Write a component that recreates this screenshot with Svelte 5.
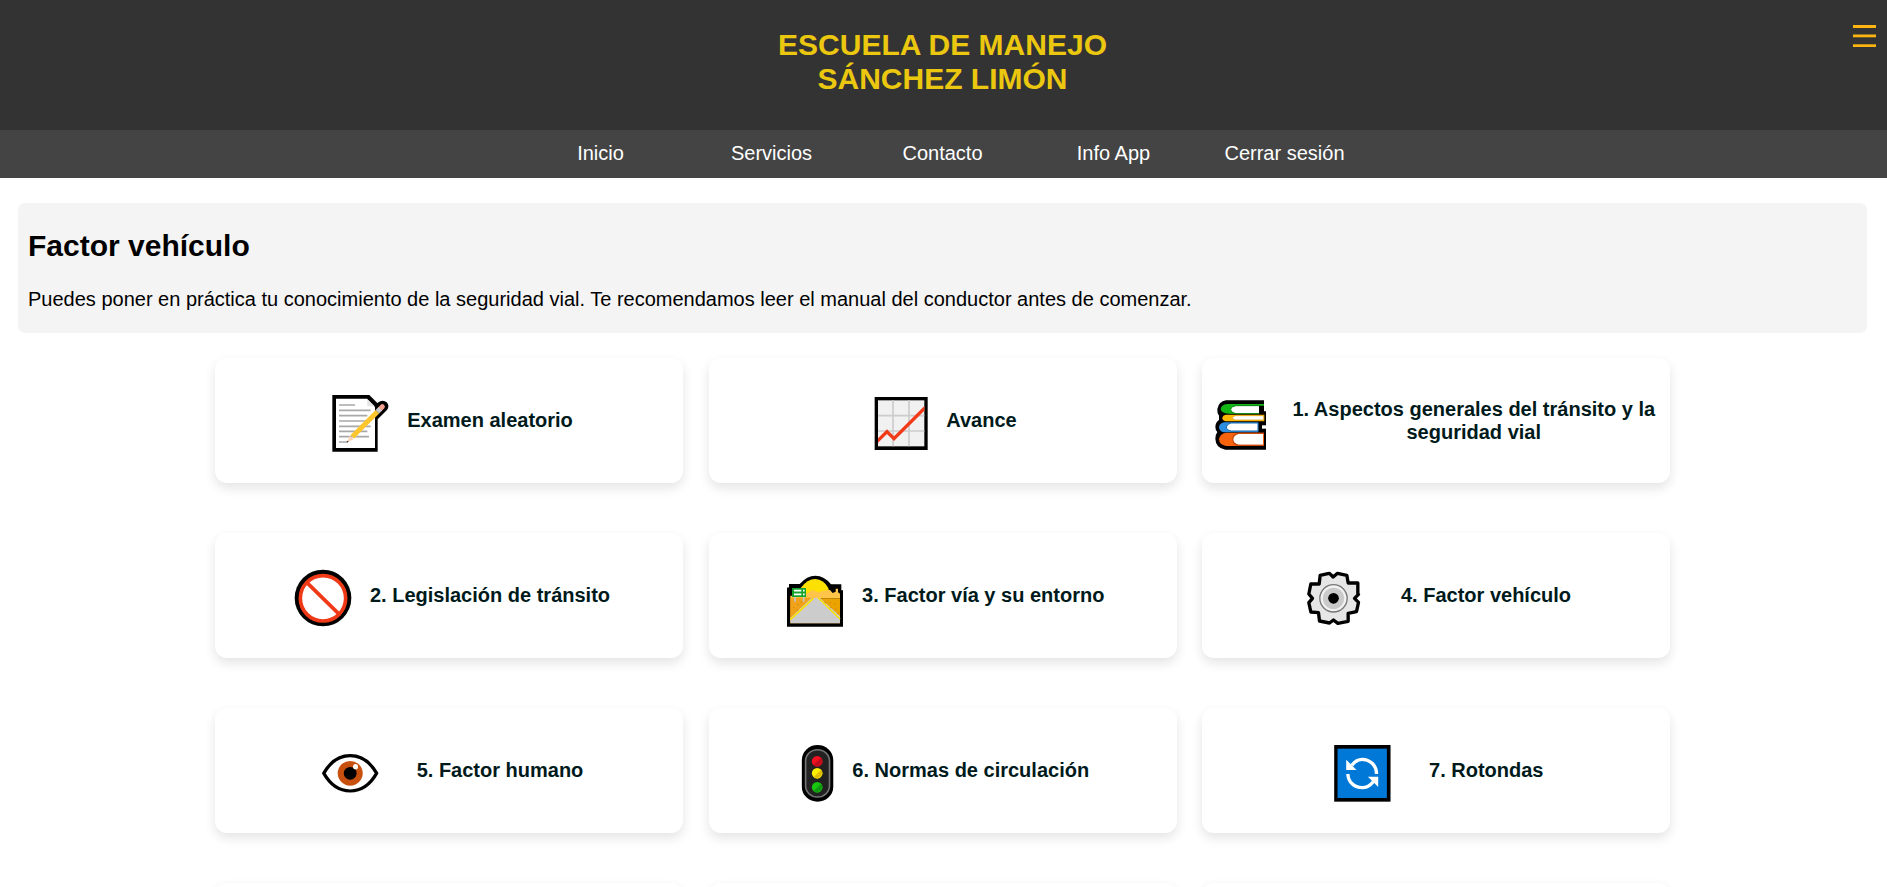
<script>
  const links = ['Inicio', 'Servicios', 'Contacto', 'Info App', 'Cerrar sesión'];
  const cards = [
    { icon: 'memo', slot: 82, text: 'Examen aleatorio' },
    { icon: 'chart', slot: 78, text: 'Avance' },
    { icon: 'books', slot: 75.5, text: '1. Aspectos generales del tránsito y la seguridad vial' },
    { icon: 'forbidden', slot: 82, text: '2. Legislación de tránsito' },
    { icon: 'road', slot: 81.5, text: '3. Factor vía y su entorno' },
    { icon: 'gear', slot: 100, text: '4. Factor vehículo' },
    { icon: 'eye', slot: 102, text: '5. Factor humano' },
    { icon: 'light', slot: 56.5, text: '6. Normas de circulación' },
    { icon: 'cycle', slot: 100.5, text: '7. Rotondas' },
    {}, {}, {}
  ];
</script>

<div class="page">
  <header>
    <h1>ESCUELA DE MANEJO<br />SÁNCHEZ LIMÓN</h1>
    <button aria-label="Menú">
      <svg width="23" height="22" viewBox="0 0 23 22" fill="#ffb511">
        <rect width="23" height="3" /><rect y="9.5" width="23" height="2.8" /><rect y="19.3" width="23" height="2.7" />
      </svg>
    </button>
  </header>

  <nav>
    {#each links as link}<a href="#top">{link}</a>{/each}
  </nav>

  <section class="intro">
    <h2>Factor vehículo</h2>
    <p>Puedes poner en práctica tu conocimiento de la seguridad vial. Te recomendamos leer el manual del conductor antes de comenzar.</p>
  </section>

  <main>
    {#each cards as card}
      <div class="card">
        {#if card.icon}
          <span class="slot" style="width: {card.slot}px">
            <svg width="70" height="64" viewBox="0 0 70 64">
              {#if card.icon === 'memo'}
                <g transform="translate(-125 -46) scale(.33333)">
                  <path d="M397 150H508L532 174Q548 162 560 172Q570 183 561 195L533 223V320H397Z" fill="#000" />
                  <path d="M408 161H501L525 186V309H408Z" fill="#fff" />
                  <path d="M502 162L524 184H502Z" fill="#e4e4e4" />
                  <path d="M417 180H465M417 196H512M417 212H502M417 228H507M417 244H512M417 259H502M417 275H507M417 291H444" stroke="#a8a8a8" stroke-width="5" />
                  <path d="M449 272L461 283L442 292Z" fill="#fbd3b4" />
                  <path d="M441 287L447 289L440 293Z" fill="#444" />
                  <path d="M457 275L532 200" stroke="#fdc62f" stroke-width="15" />
                  <path d="M541 191L547 185" stroke="#f5a18f" stroke-width="15" stroke-linecap="round" />
                  <path d="M532 200L541 191" stroke="#c9c9c9" stroke-width="15" />
                </g>
              {:else if card.icon === 'chart'}
                <g transform="translate(-168 -46) scale(.33333)">
                  <rect x="524" y="156" width="159" height="159" fill="#000" />
                  <rect x="534" y="166" width="139" height="138" fill="#f1f1f1" />
                  <path d="M579 166V304M627 166V304M534 212H673M534 258H673" stroke="#ccc" stroke-width="5" />
                  <path d="M534 280L561 253L582 274L673 183V197L582 288L561 267L534 293Z" fill="#f13a18" />
                </g>
              {:else if card.icon === 'books'}
                <g transform="translate(-22 -46) scale(.33333)">
                  <path d="M108 166H222V199H228V314H106Q77 309 76 281Q77 267 82 261Q76 256 76 245Q77 231 87 225V212Q81 205 82 192Q86 169 108 166Z" fill="#000" />
                  <path d="M112 177H222V182H207V206H117Q93 205 92 192Q94 178 112 177Z" fill="#13b713" />
                  <path d="M139 182H207V205H138Q123 203 122 193Q124 184 139 182Z" fill="#fff" />
                  <path d="M139 182H207M207 206H138Q123 203 122 193Q124 184 139 182" fill="none" stroke="#078510" stroke-width="3" />
                  <path d="M107 209H223V229H107Q96 226 97 218Q98 211 107 209Z" fill="#fdb805" />
                  <path d="M136 212H221V225H136Q127 223 127 218Q128 214 136 212Z" fill="#fff" stroke="#de9600" stroke-width="2" />
                  <path d="M102 232H205V262H101Q87 257 87 246Q88 235 102 232Z" fill="#2f8de0" />
                  <path d="M124 234H204V258H124Q110 256 109 246Q111 236 124 234Z" fill="#fff" stroke="#1167b1" stroke-width="3" />
                  <path d="M216 241H229V251H216Z" fill="#fff" />
                  <path d="M108 263H222V303H108Q88 300 87 283Q89 266 108 263Z" fill="#f7630c" />
                  <path d="M145 267H219V299H145Q128 296 127 283Q129 270 145 267Z" fill="#fff" />
                  <path d="M222 265H145Q129 269 128 283Q129 297 145 301H222" fill="none" stroke="#cc470c" stroke-width="4" />
                </g>
              {:else if card.icon === 'forbidden'}
                <g transform="translate(-8 -11) scale(.33333)">
                  <circle cx="129" cy="129" r="85" fill="#000" />
                  <circle cx="129" cy="130" r="68" fill="#fff" stroke="#f03a17" stroke-width="11" />
                  <path d="M80 82L178 178" stroke="#f03a17" stroke-width="11" />
                </g>
              {:else if card.icon === 'road'}
                <g transform="translate(-11 -11) scale(.33333)">
                  <path d="M51 215V98L57 97V87H89Q111 62 136 62Q163 62 183 88H214V106H219V215Z" fill="#000" />
                  <path d="M92 99Q112 72 136 72Q161 73 175 99L181 128H94Z" fill="#fce100" />
                  <path d="M109 128V114L120 111L126 104L145 112L157 108L174 105H180L188 114L197 110V101H204V112L210 116V130H61V122H109Z" fill="#ffc44a" />
                  <path d="M61 130H210V205H61Z" fill="#eaa300" />
                  <path d="M61 128H133L61 195Z" fill="#f0a31a" />
                  <path d="M124 129H150L210 183V205H61V189Z" fill="#ccc" />
                  <path d="M61 194L130 130M145 129L210 192" stroke="#fce100" stroke-width="5" />
                  <path d="M75 126V140M101 126V140" stroke="#c9c9c9" stroke-width="5" />
                  <rect x="66" y="99" width="42" height="27" fill="#16a52c" />
                  <path d="M72 107H94M99 107H104M72 118H94M99 118H104" stroke="#fff" stroke-width="5" />
                  <path d="M69 158h4M82 149h4M92 142h4M80 165h4M164 143h4M178 143h4M193 147h4M180 158h4M195 162h4M202 175h4" stroke="#d98a00" stroke-width="4" />
                </g>
              {:else if card.icon === 'gear'}
                <g transform="translate(-10.5 -11) scale(.33333)">
                  <path d="M89 61L112 56L117 55L128 66L141 55L169 61L173 84H202V116L204 118L192 130L204 142L198 170L173 175V199L142 205L129 195L117 204L87 198L84 173L61 171L55 143L66 130L55 117L61 87H86Z" fill="#e6e6e6" stroke="#000" stroke-width="10" stroke-linejoin="round" />
                  <circle cx="129" cy="130" r="41" fill="#f2f2f2" stroke="#777" stroke-width="4" />
                  <circle cx="129" cy="130" r="32" fill="#cacaca" />
                  <circle cx="129" cy="130" r="16" fill="#000" />
                </g>
              {:else if card.icon === 'eye'}
                <g transform="translate(-14.8 -11) scale(.35714 .33333)">
                  <path d="M66 130Q94 77 140 77Q186 77 214 130Q186 183 140 183Q94 183 66 130Z" fill="#fff" stroke="#000" stroke-width="9.5" stroke-linejoin="round" />
                  <ellipse cx="140" cy="130" rx="35" ry="37" fill="#c8500f" />
                  <ellipse cx="140" cy="130" rx="18" ry="19" fill="#000" />
                  <ellipse cx="155" cy="110" rx="7" ry="8" fill="#fff" />
                </g>
              {:else if card.icon === 'light'}
                <g transform="translate(-496.3 -11) scale(.35714 .33333)">
                  <rect x="1406" y="45" width="88" height="170" rx="44" ry="45" fill="#000" />
                  <rect x="1416.5" y="59" width="67" height="142" rx="33" ry="34" fill="#222" stroke="#757575" stroke-width="4.5" />
                  <ellipse cx="1449" cy="94" rx="15" ry="16" fill="#f01020" />
                  <path d="M1460 83A15 16 0 0 1 1439 105Z" fill="#bd0c1c" />
                  <ellipse cx="1449" cy="130" rx="15" ry="16" fill="#fff000" />
                  <path d="M1460 119A15 16 0 0 1 1439 141Z" fill="#dfbd00" />
                  <ellipse cx="1449" cy="172" rx="15" ry="16" fill="#17c50e" />
                  <path d="M1460 161A15 16 0 0 1 1439 183Z" fill="#119a11" />
                </g>
              {:else}
                <g transform="translate(-18.8 -11) scale(.33333)">
                  <rect x="72" y="45" width="169" height="170" fill="#000" />
                  <rect x="82" y="56" width="148" height="148" fill="#0078d7" />
                  <path d="M125 106Q138 88 156 88C180 88 199 107 199 132M113 132C114 156 132 173 156 173Q175 173 189 155" fill="none" stroke="#fff" stroke-width="10" />
                  <path d="M108 89L139 120H108ZM204 171L173 140H204Z" fill="#fff" />
                </g>
              {/if}
            </svg>
          </span>
          <h3>{card.text}</h3>
        {/if}
      </div>
    {/each}
  </main>
</div>

<style>
  :global(body) {
    margin: 0;
    overflow: hidden;
    background: #fff;
  }
  .page {
    height: 887px;
    overflow: hidden;
    font: 20px/23px 'Liberation Sans', Arial, sans-serif;
    color: #000;
  }
  h1, h2, h3, p { margin: 0; }
  header {
    position: relative;
    box-sizing: border-box;
    height: 130px;
    padding-top: 28px;
    background: #333;
    text-align: center;
  }
  h1 {
    font-size: 30px;
    line-height: 34px;
    color: #ebc80f;
    padding-right: 2px;
  }
  button {
    position: absolute;
    top: 25px;
    right: 11px;
    padding: 0;
    border: 0;
    background: none;
  }
  button svg { display: block; }
  nav {
    display: grid;
    grid-template-columns: repeat(5, 171px);
    justify-content: center;
    box-sizing: border-box;
    height: 48px;
    padding: 12px 2px 0 0;
    background: #444;
  }
  nav a {
    color: #fff;
    text-align: center;
    text-decoration: none;
  }
  .intro {
    box-sizing: border-box;
    height: 130px;
    margin: 25px 20px 25px 18px;
    padding: 26px 10px 0;
    border-radius: 7px;
    background: #f4f4f4;
  }
  h2 {
    font-size: 30px;
    line-height: 34px;
    margin-bottom: 25px;
  }
  main {
    display: grid;
    grid-template-columns: repeat(3, 468px);
    grid-auto-rows: 125px;
    gap: 50px 25.5px;
    justify-content: center;
    padding-right: 2px;
  }
  .card {
    display: flex;
    align-items: center;
    justify-content: center;
    box-sizing: border-box;
    padding: 0 10px;
    border-radius: 12px;
    background: #fff;
    box-shadow: 0 5px 12px rgba(0, 0, 0, 0.11);
  }
  .slot {
    flex: none;
    margin-top: 5px;
  }
  .slot svg {
    display: block;
    overflow: visible;
  }
  h3 {
    font-size: 20px;
    line-height: 23px;
    color: #001a1c;
    text-align: center;
  }
</style>
